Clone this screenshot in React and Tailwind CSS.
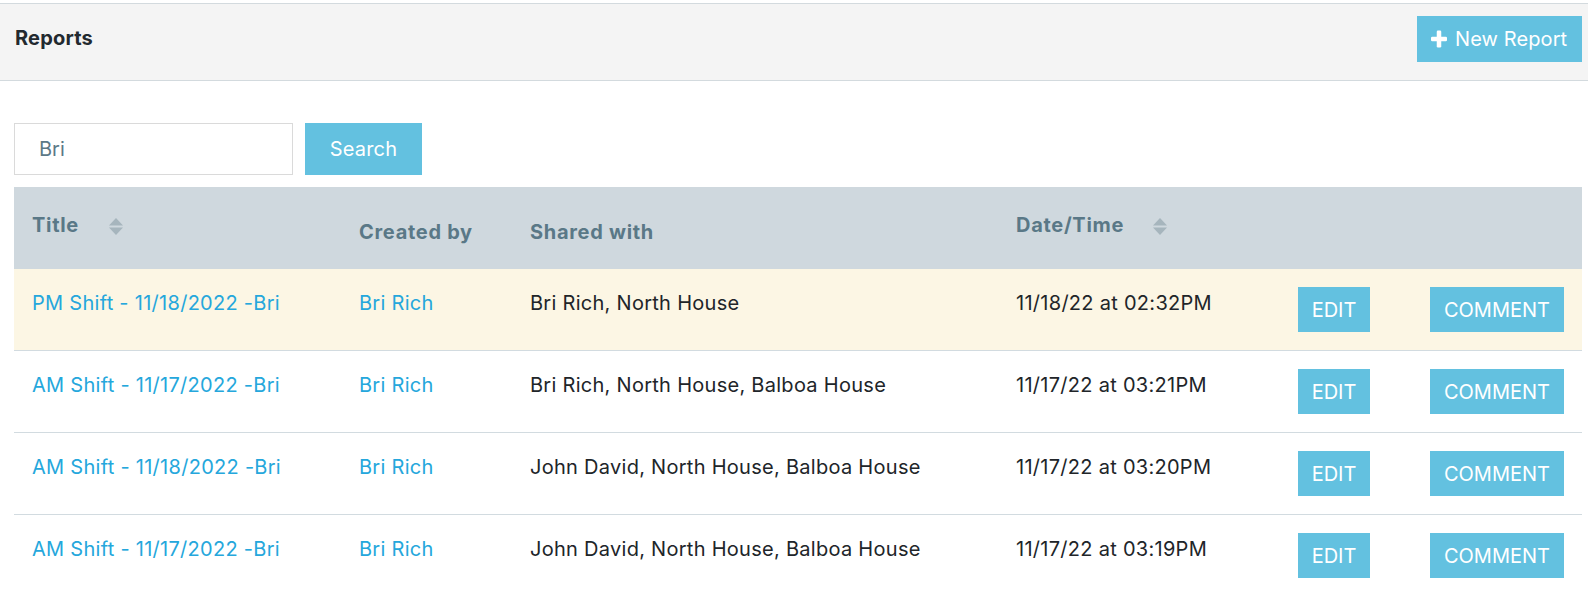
import React from "react";

const rows = [
  { title: "PM Shift - 11/18/2022 -Bri", by: "Bri Rich", shared: "Bri Rich, North House", date: "11/18/22 at 02:32PM", hl: true },
  { title: "AM Shift - 11/17/2022 -Bri", by: "Bri Rich", shared: "Bri Rich, North House, Balboa House", date: "11/17/22 at 03:21PM" },
  { title: "AM Shift - 11/18/2022 -Bri", by: "Bri Rich", shared: "John David, North House, Balboa House", date: "11/17/22 at 03:20PM" },
  { title: "AM Shift - 11/17/2022 -Bri", by: "Bri Rich", shared: "John David, North House, Balboa House", date: "11/17/22 at 03:19PM", last: true },
];

function SortIcon() {
  return (
    <svg width="14" height="17" viewBox="0 0 14 17" className="shrink-0">
      <path d="M7 0 L14 7.5 L0 7.5 Z" fill="#a6b5bd" />
      <path d="M0 9.5 L14 9.5 L7 17 Z" fill="#a6b5bd" />
    </svg>
  );
}

function PlusIcon() {
  return (
    <svg width="16" height="18" viewBox="0 0 16 18" className="shrink-0">
      <rect x="5.75" y="0.5" width="4.5" height="17" rx="1.2" fill="#ffffff" />
      <rect x="0" y="6.75" width="16" height="4.5" rx="1.2" fill="#ffffff" />
    </svg>
  );
}

export default function App() {
  return (
    <div className="min-h-screen bg-white font-['Inter','Liberation_Sans',sans-serif] text-[20px] leading-[30px] text-[#212529]">
      <div className="mt-[3px] h-[78px] border-t border-b border-[#d3dade] bg-[#f4f4f4] flex items-start justify-between pl-[15px] pr-[6px]">
        <div className="mt-[19px] font-bold tracking-[0.2px] text-[#22292f]">Reports</div>
        <button className="mt-[12px] h-[46px] w-[165px] bg-[#63c1e0] text-white flex items-center gap-[8px] pl-[14px] tracking-[0.1px]">
          <PlusIcon />
          <span>New Report</span>
        </button>
      </div>

      <div className="pl-[14px] pr-[6px]">
        <div className="mt-[42px] flex items-center gap-[12px]">
          <div className="h-[52px] w-[279px] border border-[#dadada] bg-white flex items-center pl-[24px] text-[#5c7987]">
            Bri
          </div>
          <button className="h-[52px] w-[117px] bg-[#63c1e0] text-white flex items-center justify-center tracking-[0.2px]">
            Search
          </button>
        </div>

        <div className="mt-[12px] w-[1568px]">
          <div className="h-[82px] bg-[#cfd8de] grid grid-cols-[327px_171px_486px_282px_132px_170px] font-bold tracking-[0.7px] text-[#5a7887]">
            <div className="pl-[18px] pt-[23px] flex items-start gap-[30px]">
              <span>Title</span>
              <span className="mt-[8px]"><SortIcon /></span>
            </div>
            <div className="pl-[18px] pt-[30px]">Created by</div>
            <div className="pl-[18px] pt-[30px]">Shared with</div>
            <div className="pl-[18px] pt-[23px] flex items-start gap-[29px]">
              <span>Date/Time</span>
              <span className="mt-[8px]"><SortIcon /></span>
            </div>
            <div />
            <div />
          </div>
          {rows.map((r, i) => (
            <div
              key={i}
              className={
                "grid grid-cols-[327px_171px_486px_282px_132px_170px] py-[18px] tracking-[0.28px] " +
                (r.hl ? "bg-[#fcf6e4] " : "bg-white ") +
                (r.last ? "" : "border-b border-[#d2dbe0]")
              }
            >
              <div className="pl-[18px] pt-[1px] text-[#25a7dc]">{r.title}</div>
              <div className="pl-[18px] pt-[1px] text-[#25a7dc]">{r.by}</div>
              <div className="pl-[18px] pt-[1px]">{r.shared}</div>
              <div className="pl-[18px] pt-[1px]">{r.date}</div>
              <div className="pl-[18px]">
                <button className="h-[45px] w-[72px] bg-[#63c1e0] text-white flex items-center justify-center tracking-normal">EDIT</button>
              </div>
              <div className="pl-[18px]">
                <button className="h-[45px] w-[134px] bg-[#63c1e0] text-white flex items-center justify-center tracking-normal">COMMENT</button>
              </div>
            </div>
          ))}
        </div>
      </div>
    </div>
  );
}
